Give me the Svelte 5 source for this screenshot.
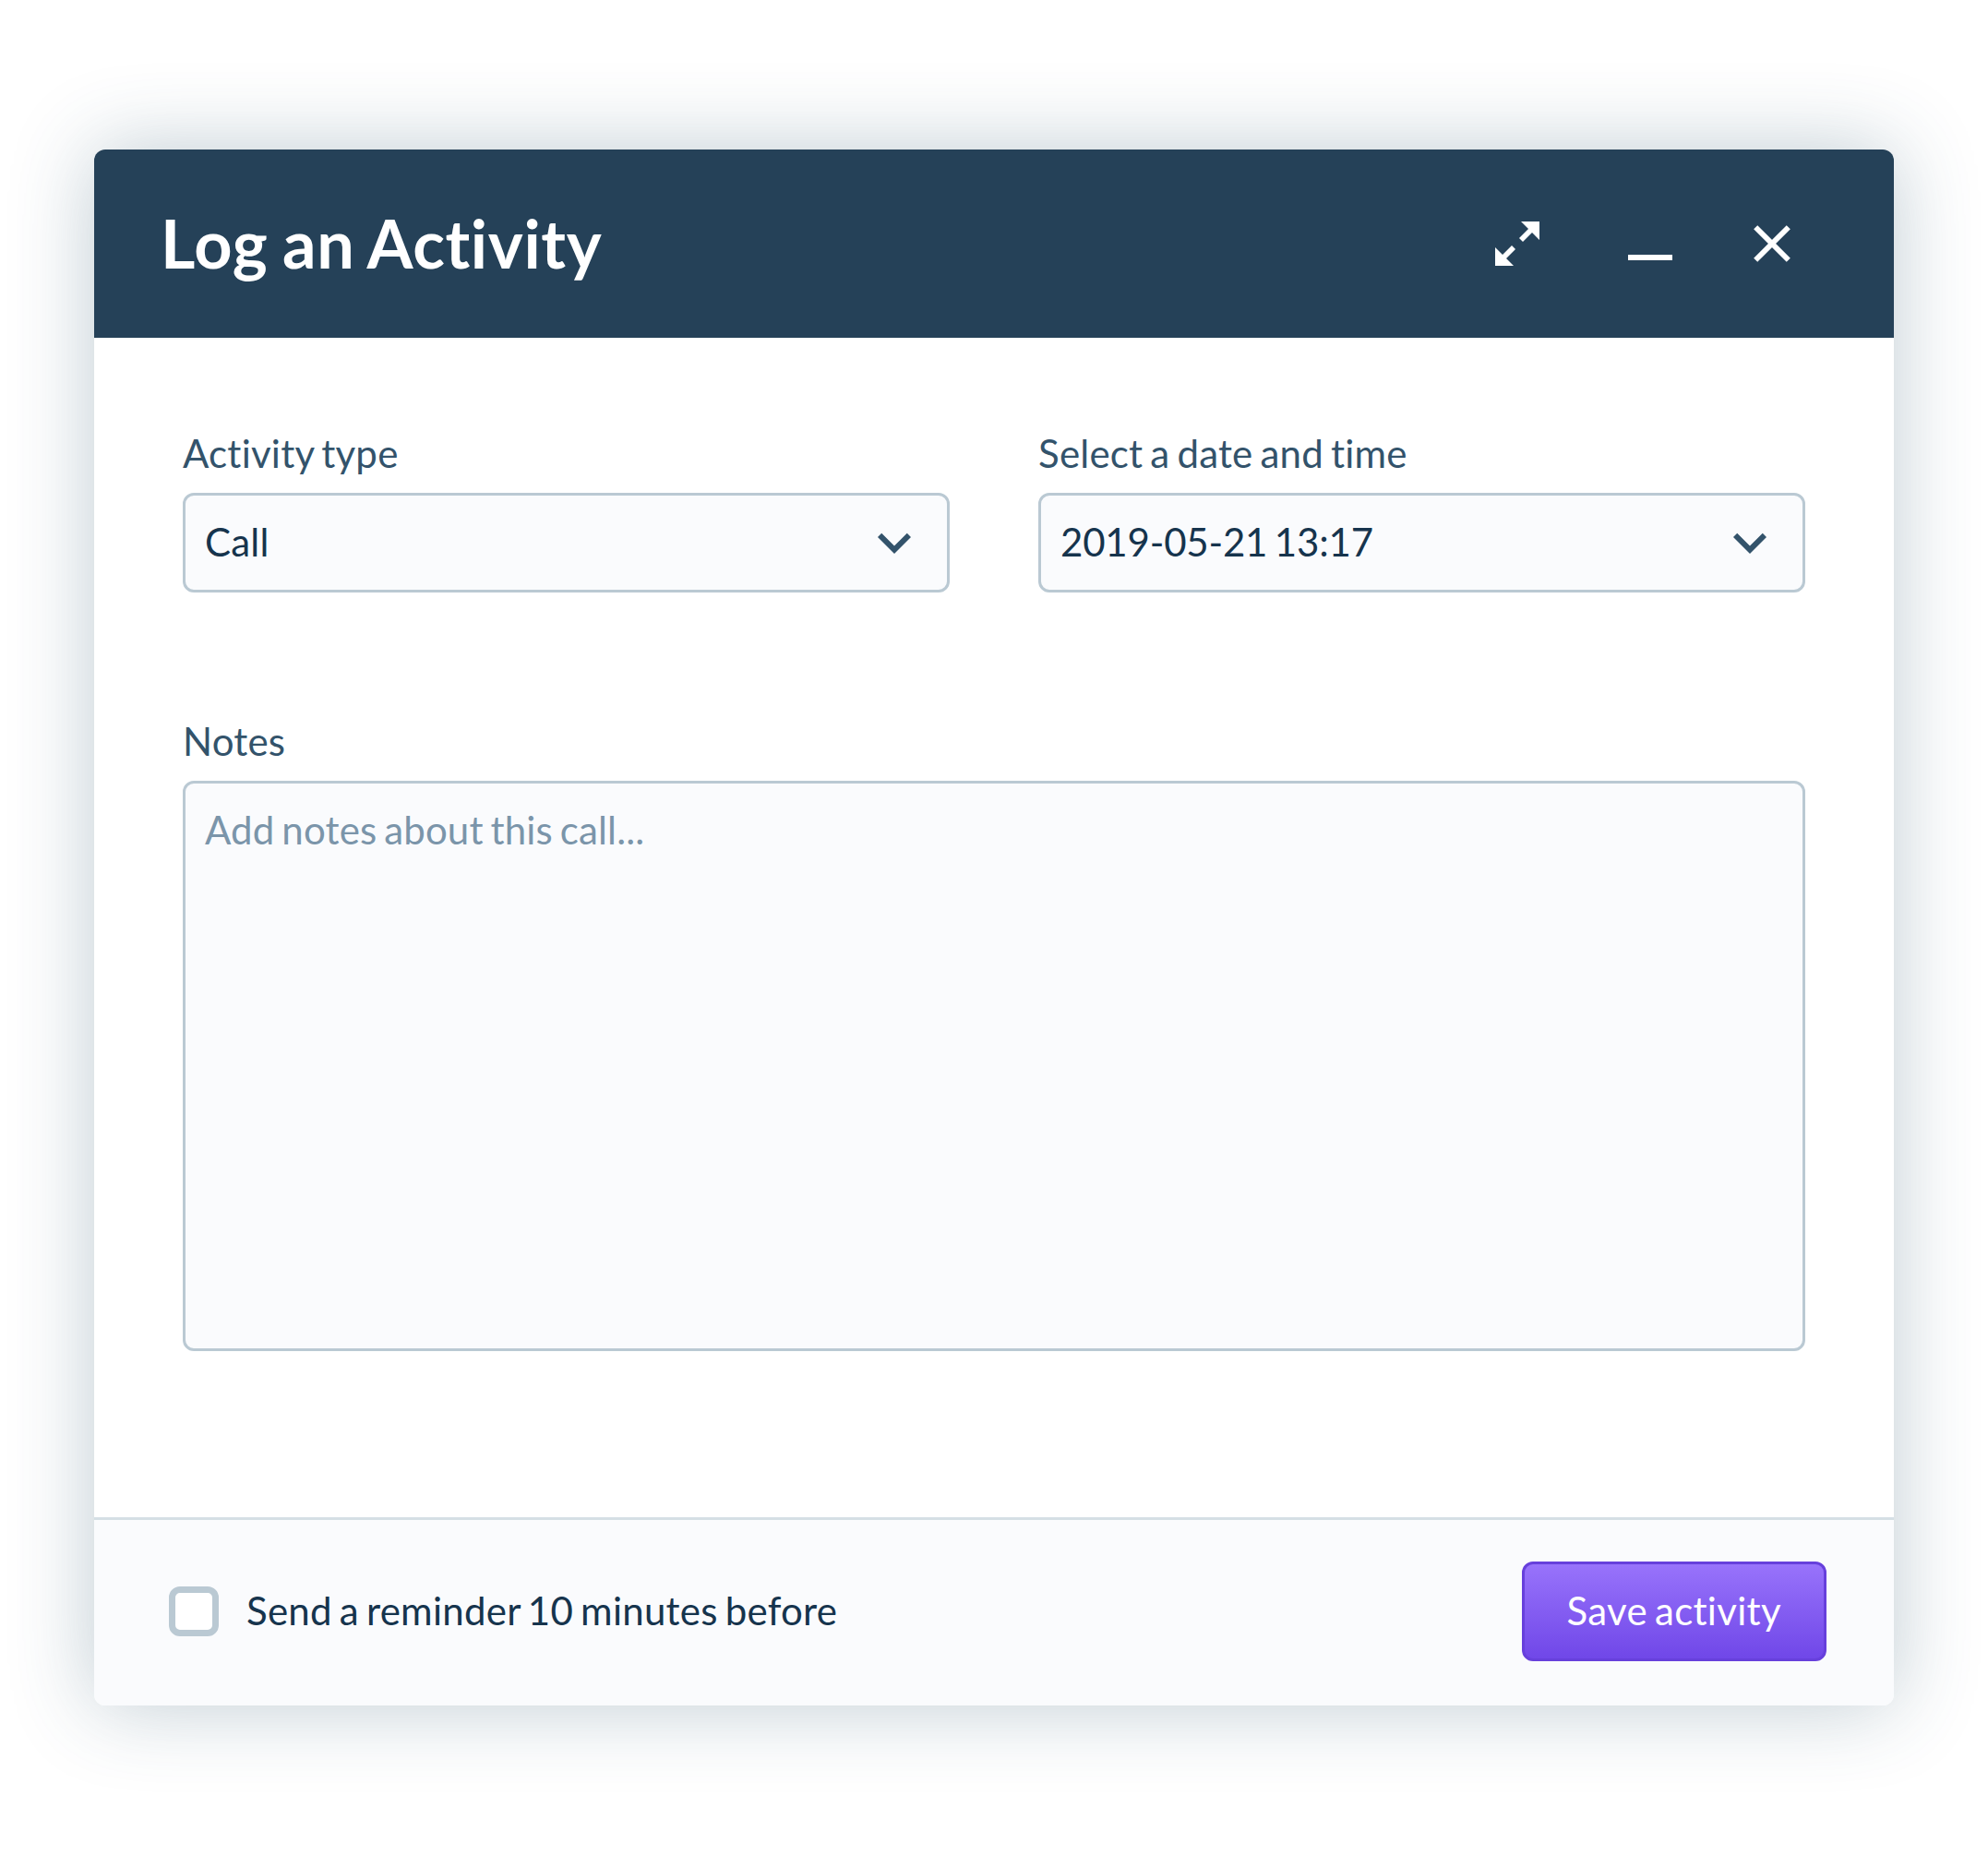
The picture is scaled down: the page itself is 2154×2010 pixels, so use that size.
<script>
  let type = $state('Call');
  let date = $state('2019-05-21 13:17');
  let notes = $state('');
  let remind = $state(false);
</script>

{#snippet chevron()}
  <svg class="chevron" viewBox="0 0 24 24" aria-hidden="true">
    <path d="M7.41 8.59 12 13.17l4.59-4.58L18 10l-6 6-6-6z" />
  </svg>
{/snippet}

<main>
  <section class="modal">
    <header>
      <h1>Log an Activity</h1>
      <div class="actions">
        <button class="icon" aria-label="Expand">
          <svg viewBox="0 0 48 48" width="48" height="48">
            <path d="M48 0v20l-8-8-10 10-4-4L36 8l-8-8zM0 48V28l8 8 10-10 4 4-10 10 8 8z" />
          </svg>
        </button>
        <button class="icon" aria-label="Minimize">
          <svg viewBox="0 0 48 48" width="48" height="48"><path d="M0 36h48v6H0z" /></svg>
        </button>
        <button class="icon" aria-label="Close">
          <svg viewBox="0 0 48 48" width="48" height="48">
            <path d="M6.2 6.2l35.6 35.6M41.8 6.2L6.2 41.8" stroke="#fff" stroke-width="5.8" />
          </svg>
        </button>
      </div>
    </header>

    <div class="body">
      <div class="row">
        <div class="field">
          <span class="label">Activity type</span>
          <div class="select"><span>{type}</span>{@render chevron()}</div>
        </div>
        <div class="field">
          <span class="label">Select a date and time</span>
          <div class="select date"><span>{date}</span>{@render chevron()}</div>
        </div>
      </div>
      <div class="field">
        <label class="label" for="notes">Notes</label>
        <textarea id="notes" placeholder="Add notes about this call..." bind:value={notes}></textarea>
      </div>
    </div>

    <footer>
      <label class="check">
        <input type="checkbox" bind:checked={remind} />
        <span>Send a reminder 10 minutes before</span>
      </label>
      <button class="save">Save activity</button>
    </footer>
  </section>
</main>

<style>
  :global(body) {
    background: #fff;
  }
  main {
    box-sizing: border-box;
    width: 2154px;
    height: 2010px;
    padding: 162px 102px;
    overflow: hidden;
    font-family: Lato, sans-serif;
    font-size: 42px;
    line-height: 58px;
    font-variant-ligatures: none;
    letter-spacing: 0.22px;
    word-spacing: -3px;
    color: #16344d;
  }
  main * {
    box-sizing: border-box;
  }
  .modal {
    display: flex;
    flex-direction: column;
    height: 1686px;
    border-radius: 12px;
    background: #fff;
    box-shadow: 0 0 90px rgba(42, 82, 106, 0.3);
    overflow: hidden;
  }
  header {
    display: flex;
    align-items: center;
    justify-content: space-between;
    height: 204px;
    padding: 0 108px 0 72px;
    background: #254158;
    color: #fff;
  }
  h1 {
    margin: 0;
    padding-bottom: 2px;
    font-size: 72px;
    line-height: 96px;
    font-weight: 700;
    letter-spacing: 0.6px;
    word-spacing: -2.5px;
  }
  .actions {
    display: flex;
    gap: 96px;
  }
  .icon {
    display: flex;
    padding: 0;
    border: 0;
    background: none;
  }
  .icon:last-child {
    margin-left: -12px;
  }
  .icon svg {
    fill: #fff;
  }
  .body {
    flex: 1;
    display: flex;
    flex-direction: column;
    gap: 132px;
    padding: 96px;
  }
  .row {
    display: grid;
    grid-template-columns: 1fr 1fr;
    gap: 96px;
  }
  .field {
    display: flex;
    flex-direction: column;
    gap: 14px;
  }
  .label {
    color: #33536b;
  }
  .select {
    display: flex;
    align-items: center;
    justify-content: space-between;
    height: 108px;
    padding: 0 21px;
    border: 3px solid #bac9d3;
    border-radius: 12px;
    background: #fafbfd;
  }
  .select span {
    padding-bottom: 2px;
  }
  .date {
    letter-spacing: -0.18px;
  }
  .chevron {
    width: 72px;
    height: 72px;
    fill: #33536b;
  }
  textarea {
    height: 618px;
    padding: 21px;
    border: 3px solid #bac9d3;
    border-radius: 12px;
    background: #fafbfd;
    color: inherit;
    font: inherit;
    font-variant-ligatures: none;
    letter-spacing: 0.15px;
    word-spacing: inherit;
    resize: none;
    outline: none;
  }
  textarea::placeholder {
    color: #7b95aa;
    opacity: 1;
  }
  footer {
    display: flex;
    align-items: center;
    justify-content: space-between;
    height: 204px;
    padding: 0 73.3px 3px 81px;
    border-top: 3px solid #d5dfe5;
    background: #fafbfd;
  }
  .check {
    display: flex;
    align-items: center;
    gap: 30px;
    letter-spacing: 0.26px;
  }
  .check span {
    padding-bottom: 2px;
  }
  input {
    appearance: none;
    width: 54px;
    height: 54px;
    margin: 0;
    border: 7.5px solid #bac9d3;
    border-radius: 12px;
    background: #fff;
  }
  .save {
    width: 330px;
    height: 108px;
    padding: 0 0 2px;
    border: 3px solid #6740dc;
    border-radius: 12px;
    background: linear-gradient(#9873fb, #7047e8);
    color: #fff;
    font: inherit;
    font-variant-ligatures: none;
    letter-spacing: 0.3px;
    word-spacing: inherit;
  }
</style>
